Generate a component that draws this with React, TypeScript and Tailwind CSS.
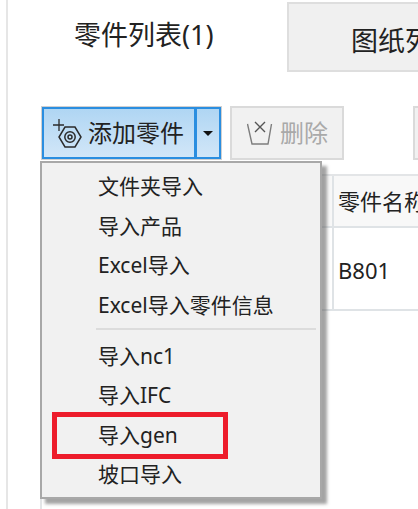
const font = "font-['Noto_Sans','Noto_Sans_CJK_SC',sans-serif]"

function ToolIconAdd() {
  return (
    <svg width="30" height="30" viewBox="0 0 30 30" fill="none" stroke="#2b2b2b" strokeWidth="1.5" className="shrink-0">
      <path d="M0 7h11M6 1v12" strokeWidth="1.3" />
      <path d="M12 9h10l6 10-6 10H12L6 19z" />
      <circle cx="17" cy="19" r="5.2" />
      <circle cx="17" cy="19" r="2" />
    </svg>
  )
}

function ToolIconDelete() {
  return (
    <svg width="26" height="26" viewBox="0 0 26 26" fill="none" stroke="#7d7d7d" strokeWidth="1.4" className="shrink-0">
      <path d="M0.5 4L5 24h16L24.5 4" />
      <path d="M8 2l10 10M18 2L8 12" stroke="#555" />
    </svg>
  )
}

const groups = [
  ['文件夹导入', '导入产品', 'Excel导入', 'Excel导入零件信息'],
  ['导入nc1', '导入IFC', '导入gen', '坡口导入'],
]

function DropMenu() {
  return (
    <div className="absolute left-[40px] top-[161px] z-10 w-[282px] h-[338px] bg-[#f1f1f1] border-2 border-[#a8a8a8] shadow-[5px_5px_3px_rgba(90,90,90,0.55)] pl-[56px] pr-[4px] pt-[4px]">
      {groups.map((items, i) => (
        <div key={i}>
          {i > 0 && <div className="h-[2px] bg-[#dcdcdc] mt-[3px] mb-[6.5px] -ml-[2px]" />}
          {items.map(label => (
            <div key={label} className="relative h-[39.5px] flex items-center text-[21px] text-[#222] whitespace-nowrap">
              {label}
              {label === '导入gen' && (
                <div className="absolute -left-[46px] top-[-4px] w-[176px] h-[47px] border-[5px] border-[#ed1c2b]" />
              )}
            </div>
          ))}
        </div>
      ))}
    </div>
  )
}

export default function App() {
  return (
    <div className={`relative w-[418px] h-[509px] overflow-hidden bg-white ${font}`}>
      <div className="h-full ml-[6px] border-l-2 border-[#e6e6e6] flex flex-col">
        {/* tabs */}
        <div className="flex h-[72px] shrink-0">
          <div className="w-[279px] shrink-0 pl-[66px] pt-[15px] text-[27px] leading-[40px] text-[#222] whitespace-nowrap">零件列表(1)</div>
          <div className="flex-1 mt-[2px] bg-[#f0f0f0] border-2 border-r-0 border-[#dedede] pl-[62px] pt-[17px] text-[27px] leading-[40px] text-[#222] whitespace-nowrap overflow-hidden">
            图纸列表
          </div>
        </div>
        {/* toolbar */}
        <div className="flex items-start mt-[34px] pl-[33px] h-[54px] shrink-0">
          <div className="flex w-[181px] h-[54px] shrink-0 border border-[#d0d0d0] bg-gradient-to-b from-[#aed5f3] to-[#d3e7f8]">
            <div className="flex-1 flex items-center gap-[5px] pl-[9px] border-2 border-[#2a8ee0] text-[24px] text-[#222]">
              <ToolIconAdd />
              <span className="whitespace-nowrap">添加零件</span>
            </div>
            <div className="w-[26px] -ml-[1px] flex items-center justify-center border-2 border-[#2a8ee0]">
              <span className="border-x-[5px] border-t-[5px] border-x-transparent border-t-[#111]" />
            </div>
          </div>
          <div className="ml-[8px] w-[114px] h-[54px] shrink-0 flex items-center gap-[7px] pl-[15px] bg-[#f1f1f1] border-2 border-[#dadada] text-[24px] text-[#a9a9a9]">
            <ToolIconDelete />
            <span className="whitespace-nowrap">删除</span>
          </div>
          <div className="ml-[69px] w-[20px] h-[54px] shrink-0 bg-[#f1f1f1] border-2 border-r-0 border-[#dadada]" />
        </div>
        {/* table */}
        <div className="flex-1 mt-[14px] ml-[32px] border-l-2 border-t-2 border-[#e3e5e7] text-[#222]">
          <div className="flex h-[52px] border-b-2 border-[#dfe3e6] bg-[#f8f8f8]">
            <div className="w-[290px] shrink-0" />
            <div className="flex-1 border-l-2 border-[#dfe3e6] pl-[4px] flex items-center text-[22px] whitespace-nowrap overflow-hidden">
              零件名称
            </div>
          </div>
          <div className="flex h-[83px] border-b-2 border-[#dfe3e6]">
            <div className="w-[290px] shrink-0" />
            <div className="flex-1 border-l-2 border-[#dfe3e6] pl-[4px] pt-[4px] flex items-center text-[22px]">B801</div>
          </div>
        </div>
      </div>
      <DropMenu />
    </div>
  )
}
